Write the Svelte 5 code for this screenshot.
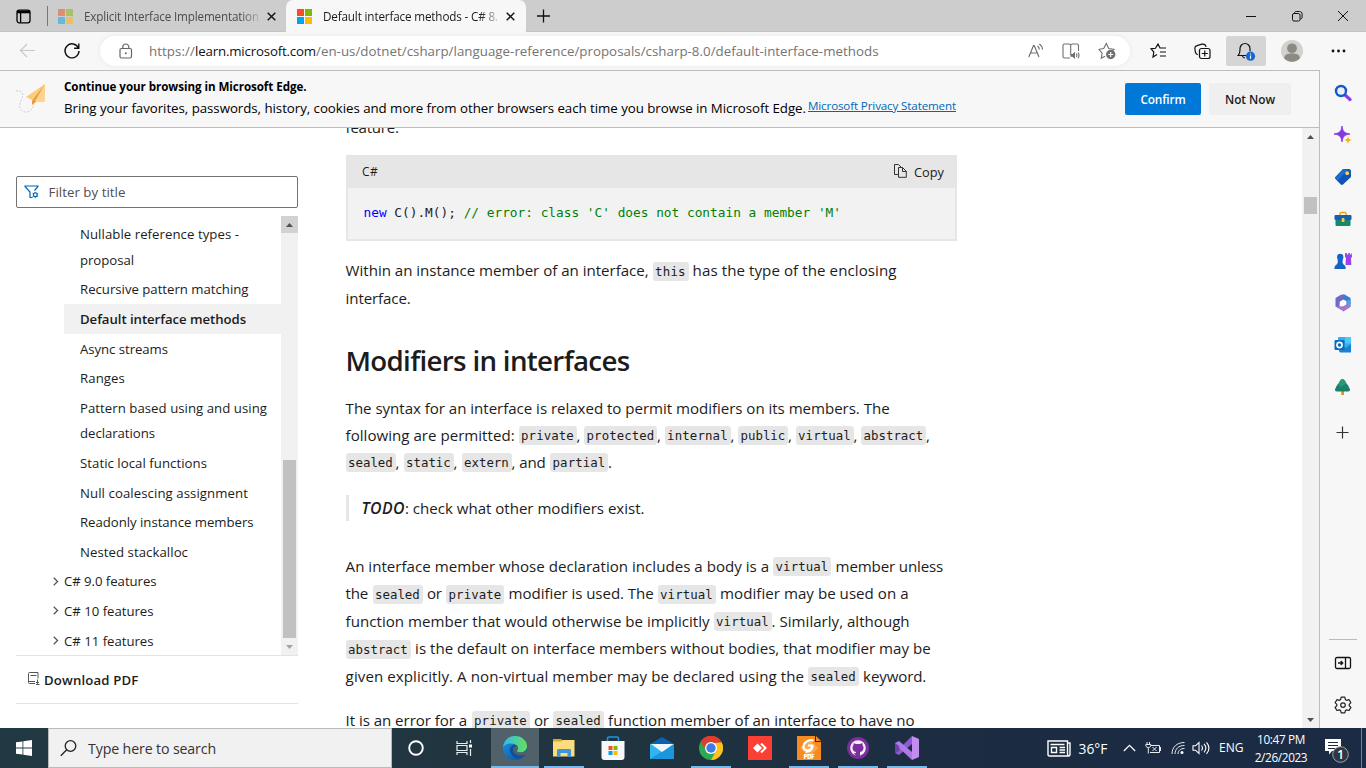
<script>
  // Spreads letters so a run of text fills its column width.
  function fit(node, width) {
    const natural = node.getBoundingClientRect().width;
    const count = [...node.textContent].length;
    if (width && count) node.style.letterSpacing = `${(width - natural) / count}px`;
  }

  const toc = [
    { lines: [['Nullable reference types -', 159], ['proposal', 54]] },
    { lines: [['Recursive pattern matching', 168.5]] },
    { lines: [['Default interface methods', 166]], current: true },
    { lines: [['Async streams', 88]] },
    { lines: [['Ranges', 45]] },
    { lines: [['Pattern based using and using', 187], ['declarations', 75]] },
    { lines: [['Static local functions', 127]] },
    { lines: [['Null coalescing assignment', 168]] },
    { lines: [['Readonly instance members', 173.5]] },
    { lines: [['Nested stackalloc', 108]] },
    { lines: [['C# 9.0 features', 92.5]], parent: true },
    { lines: [['C# 10 features', 89.5]], parent: true },
    { lines: [['C# 11 features', 89.5]], parent: true }
  ];

  // Each run: text, gap before it, width, and whether it is inline code.
  const p1 = [
    [['Within an instance member of an interface,', 0, 303], ['this', 4, 36, 1], ['has the type of the enclosing', 4, 204]],
    [['interface.', 0, 65]]
  ];
  const p2 = [
    [['The syntax for an interface is relaxed to permit modifiers on its members. The', 0, 544]],
    [['following are permitted:', 0, 169], ['private', 4, 58, 1], [',', 0, 4], ['protected', 3.5, 73, 1], [',', 0, 4], ['internal', 3.5, 66, 1], [',', 0, 4], ['public', 3.5, 50, 1], [',', 0, 4], ['virtual', 3.5, 58, 1], [',', 0, 4], ['abstract', 3.5, 65, 1], [',', 0, 4]],
    [['sealed', 0, 50, 1], [',', 0, 4], ['static', 4, 50, 1], [',', 0, 4], ['extern', 4, 50, 1], [', and', 0, 34], ['partial', 4.5, 58, 1], ['.', 0, 4]]
  ];
  const p3 = [
    [['An interface member whose declaration includes a body is a', 0, 423.5], ['virtual', 4, 58, 1], ['member unless', 4.5, 107.5]],
    [['the', 0, 22.5], ['sealed', 4.5, 50, 1], ['or', 4.5, 14.5], ['private', 4.5, 58, 1], ['modifier is used. The', 4.5, 145], ['virtual', 4, 58, 1], ['modifier may be used on a', 4.5, 188.5]],
    [['function member that would otherwise be implicitly', 0, 364], ['virtual', 4, 58, 1], ['. Similarly, although', 0, 138]],
    [['abstract', 0, 65, 1], ['is the default on interface members without bodies, that modifier may be', 4.5, 515.5]],
    [['given explicitly. A non-virtual member may be declared using the', 0, 458.5], ['sealed', 4, 50.5, 1], ['keyword.', 4.5, 63]]
  ];
  const p4 = [
    [['It is an error for a', 0, 121.5], ['private', 4.5, 58, 1], ['or', 4.5, 14.5], ['sealed', 4.5, 50.5, 1], ['function member of an interface to have no', 4.5, 306.5]]
  ];
</script>

{#snippet para(lines, cls)}
  <div class="para {cls}">
    {#each lines as line}
      <div class="line">
        {#each line as [text, gap, width, code]}
          <span class="run" class:code style="margin-left:{gap}px;width:{width}px"><span class="t" use:fit={code ? width - 5.4 : width}>{text}</span></span>
        {/each}
      </div>
    {/each}
  </div>
{/snippet}

{#snippet mslogo(o)}
  <svg width="15" height="15" viewBox="0 0 15 15" opacity={o}><path fill="#f25022" d="M0 0h7v7H0z" /><path fill="#7fba00" d="M8 0h7v7H8z" /><path fill="#00a4ef" d="M0 8h7v7H0z" /><path fill="#ffb900" d="M8 8h7v7H8z" /></svg>
{/snippet}

{#snippet cross()}
  <svg width="9" height="9" viewBox="0 0 9 9" stroke="#111" stroke-width="1.4"><path d="M.7.7l7.6 7.6M8.3.7L.7 8.3" /></svg>
{/snippet}

<div class="screen">
  <header class="tabs">
    <svg class="ws" width="15" height="15" viewBox="0 0 15 15" fill="none" stroke="#000" stroke-width="1.3"><rect x="1" y="1.2" width="13" height="12.6" rx="2.2" /><path d="M1 3h13" stroke-width="2.6" /><path d="M4.6 4v9.5" /></svg>
    <i class="sep"></i>
    <div class="tab idle">{@render mslogo(0.5)}<span class="ttl"><span class="t" use:fit={175}>Explicit Interface Implementation</span></span>{@render cross()}</div>
    <div class="tab active">{@render mslogo(1)}<span class="ttl"><span class="t" use:fit={175}>Default interface methods - C# 8.</span></span>{@render cross()}</div>
    <svg class="plus" width="14" height="14" viewBox="0 0 14 14" stroke="#111" stroke-width="1.3"><path d="M6.500 .5v13M0 7h13" /></svg>
    <div class="win">
      <svg width="12" height="12" viewBox="0 0 12 12" stroke="#111"><path d="M1 6.5h10" /></svg>
      <svg width="12" height="12" viewBox="0 0 12 12" fill="none" stroke="#111"><rect x="1.5" y="3.5" width="7.5" height="7.5" rx="1.5" /><path d="M3.5 3.2c0-1.2.8-1.7 1.7-1.7h3.3c1.7 0 2.6.9 2.6 2.6v3.2c0 1-.6 1.7-1.8 1.7" /></svg>
      <svg width="12" height="12" viewBox="0 0 12 12" stroke="#111"><path d="M1 1l10 10M11 1L1 11" /></svg>
    </div>
  </header>

  <div class="toolbar">
    <svg width="16" height="16" viewBox="0 0 16 16" fill="none" stroke="#c8c8c8" stroke-width="1.2"><path d="M16 7.500H1.500M8 1L1.500 7.500 8 14" /></svg>
    <svg width="18" height="18" viewBox="0 0 18 18" fill="none" stroke="#111" stroke-width="1.4"><path d="M15.400 6A7 7 0 1 0 16 9M15.800 1.500v4.700h-4.700" /></svg>
    <div class="address">
      <svg class="lock" width="14" height="17" viewBox="0 0 14 17" fill="none" stroke="#666" stroke-width="1.2"><rect x="1" y="5.500" width="11.500" height="9.500" rx="1.500" /><path d="M3.800 5.500V4a3 3 0 0 1 6 0v1.500" /><circle cx="6.800" cy="10.200" r="1" fill="#666" stroke="none" /></svg>
      <span class="url"><span class="t" use:fit={46}>https://</span><b class="t" use:fit={121}>learn.microsoft.com</b><span class="t" use:fit={562.5}>/en-us/dotnet/csharp/language-reference/proposals/csharp-8.0/default-interface-methods</span></span>
      <svg class="ra" width="17" height="16" viewBox="0 0 17 16" fill="none" stroke="#707070" stroke-width="1.2"><path d="M.8 14L5.500 2.500h.700L11 14M2.500 10h6.700M9.500 3c1.200.900 1.800 2 1.800 3.500M11.300 1c2 1.300 3.200 3.200 3.200 5.500" /></svg>
      <svg class="rd" width="18" height="17" viewBox="0 0 18 17" fill="none" stroke="#707070" stroke-width="1.100"><path d="M8 15H2.500C1.500 15 1 14.500 1 13.500v-11C1 1.500 1.500 1 2.500 1H7c1 0 1.700.6 1.700 1.500v9.500M8.700 2.500C8.700 1.600 9.300 1 10.300 1H15c1 0 1.500.5 1.500 1.500V8" /><path d="M8.500 11h2l2.500-2.300v7.300L10.500 13.700h-2z" fill="#707070" stroke="none" /><path d="M14.300 10.700c.8 1 .8 2.300 0 3.300M16 9.500c1.400 2 1.400 3.800 0 5.800" /></svg>
      <svg class="sa" width="19" height="18" viewBox="0 0 19 18" fill="none" stroke="#707070" stroke-width="1.100"><path d="M7 14.300L3.300 16.200l.8-5L1 7.300l4.700-.8L8.300 1.500l2.500 5 5.200.8-1.700 1.700" /><circle cx="12.700" cy="12.500" r="4.700" fill="#707070" stroke="none" /><path d="M12.700 10v5M10.200 12.500h5" stroke="#fff" /></svg>
    </div>
    <div class="tools">
      <svg width="17" height="16" viewBox="0 0 17 16" fill="none" stroke="#111" stroke-width="1.200"><path d="M7 11.500L3 14l.8-5L1 5.800l4.500-.5L8 1l2 4h6M10 9h6M10 13h6" /></svg>
      <svg width="17" height="17" viewBox="0 0 17 17" fill="none" stroke="#111" stroke-width="1.200"><path d="M3.800 11.800C2.500 11.300 1.800 10.500 1.500 9.500L.9 6C.6 4 1.300 3 3 2.600L8 1.200c2-.5 3.200.1 3.800 1.800l.2.900" /><rect x="5.500" y="5.500" width="10.500" height="10" rx="2" /><path d="M10.750 7.500v6M7.750 10.500h6" /></svg>
      <div class="bell"><svg width="19" height="19" viewBox="0 0 19 19" fill="none" stroke="#111" stroke-width="1.200"><path d="M9 13.500H1.200C2.500 12 3 10.500 3 8V6.500a5 5 0 0 1 10 0V9M5.500 14c.3 1.500 1.200 2 2.500 2" /><circle cx="13.500" cy="14.200" r="4.600" fill="#1467d2" stroke="none" /><path d="M13.500 13.500v3.200M13.500 11.400v1.200" stroke="#fff" /></svg></div>
      <svg width="22" height="22" viewBox="0 0 22 22"><circle cx="11" cy="11" r="11" fill="#d3d1ce" /><circle cx="11" cy="8.300" r="4.900" fill="#8d8985" /><path d="M3 18c1-4 4-4.500 8-4.500s7 .5 8 4.500c-4 5-12 5-16 0z" fill="#8d8985" /></svg>
      <svg width="15" height="4" viewBox="0 0 15 4" fill="#111"><circle cx="2" cy="2" r="1.400" /><circle cx="7.500" cy="2" r="1.400" /><circle cx="13" cy="2" r="1.400" /></svg>
    </div>
  </div>

  <div class="middle">
    <div class="content">
      <div class="infobar">
        <svg class="plane" width="32" height="34" viewBox="0 0 32 34"><path d="M0 9c5-1 8 2 6.500 6-1 3.500-4 7-2.500 11 2 6 12 6 14-4" fill="none" stroke="#ccc" stroke-dasharray="2 1.500" /><path d="M29 2L10 15l7 3.500-.5 4 4-2.800L28.500 20z" fill="#ffca7a" /><path d="M29 2L16 19v4l3.500-3z" fill="#e69a3c" /><path d="M29 2L19 19l9.500 1z" fill="#ffd48c" /></svg>
        <div class="msg">
          <div class="m1"><b class="t" use:fit={242.500}>Continue your browsing in Microsoft Edge.</b></div>
          <div class="m2"><span class="t" use:fit={742}>Bring your favorites, passwords, history, cookies and more from other browsers each time you browse in Microsoft Edge.</span><span class="priv"><span class="t" use:fit={148}>Microsoft Privacy Statement</span></span></div>
        </div>
        <button class="primary"><span class="t" use:fit={45}>Confirm</span></button>
        <button><span class="t" use:fit={50}>Not Now</span></button>
      </div>

      <div class="page">
        <nav class="side">
          <div class="filter">
            <svg width="16" height="14" viewBox="0 0 16 14" fill="none" stroke="#0067b8" stroke-width="1.200"><path d="M8.500 12.500H6V7L1 1.500V1h13v.5L10.500 5.500" /><circle cx="11.300" cy="9.800" r="1.900" /><path d="M11.300 6.800v1M11.300 12v1.300M8.500 8.300l1 .6M13.200 11l1 .6M8.500 11.500l1-.6M13.200 8.800l1-.6" stroke-width=".8" /></svg>
            <span class="t" use:fit={77}>Filter by title</span>
          </div>
          <div class="scroll">
            <div class="toc">
              {#each toc as item}
                <div class="item" class:current={item.current} class:parent={item.parent}>
                  {#if item.parent}<svg width="7" height="9" viewBox="0 0 7 9" fill="none" stroke="#505050" stroke-width="1.200"><path d="M1.500.8l3.800 3.700-3.800 3.700" /></svg>{/if}
                  <div>{#each item.lines as [text, w]}<div class="tl"><span class="t" use:fit={w}>{text}</span></div>{/each}</div>
                </div>
              {/each}
            </div>
            <div class="bar">
              <div class="btn up"><svg width="7" height="4" viewBox="0 0 7 4"><path d="M0 4L3.500 0 7 4z" fill="#505050" /></svg></div>
              <i class="thumb"></i>
              <div class="btn"><svg width="7" height="4" viewBox="0 0 7 4"><path d="M0 0h7L3.500 4z" fill="#a3a3a3" /></svg></div>
            </div>
          </div>
          <div class="pdf">
            <svg width="13" height="13" viewBox="0 0 13 13" fill="none" stroke="#555"><path d="M7 11.500H1.500a1 1 0 0 1-1-1V1.500a1 1 0 0 1 1-1h8.500v6M.5 9.500H7M2.500 3.500h6M9.500 7.500v4M8 10l1.500 1.500L11 10M8 12.500h3.500" /></svg>
            <b class="t" use:fit={94.500}>Download PDF</b>
          </div>
        </nav>

        <main>
          {@render para([[['feature.', 0, 53]]], 'first')}
          <div class="block">
            <div class="bh"><span class="t lang" use:fit={16}>C#</span>
              <span class="copy"><svg width="13" height="14" viewBox="0 0 13 14" fill="none" stroke="#333"><path d="M4 10.500H.5V.5h4l2.500 2.500M4.500 3.500h4l3.800 3.800v6H4.500zM8.500 3.500v4h3.800" /></svg><span class="t" use:fit={30}>Copy</span></span>
            </div>
            <pre><span class="t" use:fit={477.500}><i class="kw">new</i> C().M(); <i class="cm">// error: class 'C' does not contain a member 'M'</i></span></pre>
          </div>
          {@render para(p1, 'a')}
          <h2><span class="t" use:fit={284}>Modifiers in interfaces</span></h2>
          {@render para(p2, 'b')}
          <blockquote><b class="t" use:fit={43.500}>TODO</b><span class="t" use:fit={239.500}>: check what other modifiers exist.</span></blockquote>
          {@render para(p3, 'c')}
          {@render para(p4, 'd')}
        </main>

        <div class="bar vbar">
          <div class="btn"><svg width="7" height="4" viewBox="0 0 7 4"><path d="M0 4L3.500 0 7 4z" fill="#505050" /></svg></div>
          <i class="thumb"></i>
          <div class="btn"><svg width="7" height="4" viewBox="0 0 7 4"><path d="M0 0h7L3.500 4z" fill="#505050" /></svg></div>
        </div>
      </div>
    </div>

    <aside>
      <svg viewBox="0 0 18 18"><path d="M10.500 10.500l5.500 5" stroke="#8a3ee8" stroke-width="3.200" stroke-linecap="round" /><circle cx="7" cy="7" r="5" fill="#e8f2fd" stroke="#1558c8" stroke-width="2.400" /></svg>
      <svg viewBox="0 0 18 18"><path d="M8 0c.6 3 1 4.800 2.200 5.800C11.300 7 13 7.400 16 8c-3 .6-4.700 1-5.800 2.200C9 11.300 8.600 13 8 16c-.6-3-1-4.700-2.200-5.800C4.700 9 3 8.600 0 8c3-.6 4.700-1 5.800-2.200C7 4.800 7.400 3 8 0z" fill="#8438df" stroke="#8438df" stroke-width=".8" /><path d="M14 10c.4 2.500 1.200 3.300 4 4-2.800.7-3.600 1.500-4 4-.4-2.500-1.200-3.300-4-4 2.800-.7 3.600-1.500 4-4z" fill="#f5b31a" /></svg>
      <svg viewBox="0 0 18 18"><path d="M9 1h6.500L17 2.500V9l-8 7.500c-.8.600-1.500.6-2.200 0L1.500 11c-.7-.8-.7-1.500 0-2.200z" fill="#0f55b8" /><path d="M1.500 9.500L9.500 1.500H14L3.500 12.800z" fill="#2585e8" opacity=".55" /><circle cx="13.200" cy="5.200" r="1.900" fill="#ffd25a" /></svg>
      <svg viewBox="0 0 18 18"><path d="M6 5V3.500C6 2.700 6.500 2.500 7 2.500h4c.7 0 1 .3 1 1V5" fill="none" stroke="#eaa51f" stroke-width="1.500" /><rect x="1.500" y="8" width="15" height="8" rx="1" fill="#138a70" /><rect x=".5" y="5" width="17" height="5" rx="1" fill="#175fb5" /><rect x="7.700" y="8" width="2.800" height="4" rx=".8" fill="#ffc83d" /></svg>
      <svg viewBox="0 0 18 18"><path d="M11 1h1.800v1.500h1.500V1H16v1.500h1.500V1H18v4l-1 1 .3 7H11.500l.5-7-1-1z" fill="#9a43e6" /><circle cx="6.200" cy="5" r="3.200" fill="#1463c7" /><path d="M3.500 7.500h5.500v1.300H8.300c.2 2.500 1 3.700 2.500 4.700.8.700 1 2 .8 3.500H.6c-.2-1.500 0-2.800.8-3.500 1.500-1 2.500-2.200 2.600-4.700H3.500z" fill="#1463c7" /></svg>
      <svg viewBox="0 0 18 18"><path d="M6.500 1L10.500.5 16.500 4v6l-4 1.500V7L9 5.500 5 8z" fill="#3f78d2" /><path d="M6.500 1L1.500 4v8.500l4.100 2.300V8.300L9 5.500 10.500.5z" fill="#6d6bc4" /><path d="M1.800 12.500l7.200-.2 3.500-2.500L16.500 8v5L9.500 17.500z" fill="#a875cf" /><path d="M16.500 5v7.500l-4-2V7z" fill="#4aa3dd" /><path d="M9 6l3.200 1.600v3L9 12.300 6 10.600v-3z" fill="#fff" /></svg>
      <svg viewBox="0 0 18 18"><rect x="4" y="1" width="13" height="13" rx="1" fill="#35aeea" /><path d="M11 1h6v6.500h-6z" fill="#50c8f4" /><path d="M5 8l6.500 4 5.500-4v8.500H6L5 15z" fill="#1684cf" /><rect x=".5" y="4" width="10" height="10" rx="1" fill="#0b6bbd" /><circle cx="5.500" cy="9" r="2.600" fill="none" stroke="#fff" stroke-width="1.600" /></svg>
      <svg viewBox="0 0 18 18"><path d="M7.200 12H10v5H7.200z" fill="#dc981e" /><path d="M8.500 1c1.200 0 3 2 4 4.500 1.500 1.500 2.800 4 3.500 6 .2 1.200-.6 2-1.800 2H2.800c-1.200 0-2-.8-1.800-2 .7-2 2-4.500 3.500-6C5.500 3 7.300 1 8.500 1z" fill="#198269" /><path d="M8.500 1c1.200 0 3 2 4 4.500L6.500 9l-2-3.500C5.500 3 7.300 1 8.500 1z" fill="#36a58b" opacity=".6" /></svg>
      <svg class="add" viewBox="0 0 18 18" stroke="#333" stroke-width="1.200"><path d="M8.500 2.500v12M2.500 8.500h12" /></svg>
      <i class="rule"></i>
      <svg viewBox="0 0 18 18" fill="none" stroke="#111" stroke-width="1.300"><rect x="1.500" y="3.500" width="15" height="11" rx="1.500" /><path d="M11.500 3.500v11M4 9h4.500M6.700 7l2 2-2 2" /></svg>
      <svg viewBox="0 0 18 18" fill="none" stroke="#222" stroke-width="1.200"><path d="M7.200 1.200h3.600l.6 2.400 1.300.7 2.400-.6 1.800 3-1.700 1.700v1.400l1.700 1.600-1.800 3.100-2.400-.7-1.300.8-.6 2.300H7.200l-.6-2.300-1.300-.8-2.400.7-1.800-3.100 1.700-1.600V8.400L1.100 6.700l1.800-3 2.400.6 1.300-.7z" stroke-linejoin="round" /><circle cx="9" cy="9.100" r="2.300" /></svg>
    </aside>
  </div>

  <footer>
    <div class="start"><svg width="16" height="16" viewBox="0 0 16 16" fill="#fff"><path d="M0 2.300L6.500 1.400v6.200H0zM7.300 1.300L16 0v7.600H7.300zM0 8.400h6.500v6.200L0 13.700zM7.300 8.400H16V16l-8.700-1.300z" /></svg></div>
    <div class="search"><svg width="17" height="17" viewBox="0 0 17 17" fill="none" stroke="#222" stroke-width="1.300"><circle cx="10.500" cy="6" r="5.300" /><path d="M6.700 9.800L.8 15.800" /></svg><span class="t" use:fit={128}>Type here to search</span></div>
    <div class="sys"><svg width="16" height="16" viewBox="0 0 16 16"><circle cx="8" cy="8" r="6.800" fill="none" stroke="#fff" stroke-width="1.900" /></svg></div>
    <div class="sys"><svg width="17" height="16" viewBox="0 0 17 16" fill="none" stroke="#e8edf0" stroke-width="1.200"><path d="M1 1v2.500h10V1M1 15v-2.500h10V15M1 5.500h10v5H1zM14.500 0v3M14.500 9v7" /><path d="M13 4.500h3v3h-3z" fill="#fff" stroke="none" /></svg></div>
    <div class="app on">
      <svg viewBox="0 0 24 24"><defs><linearGradient id="eg" x1="0" x2="1"><stop offset="0" stop-color="#32b8ee" /><stop offset="1" stop-color="#66e05a" /></linearGradient><linearGradient id="eb" x1="0" y1="0" x2="1" y2="1"><stop offset="0" stop-color="#1a9ae4" /><stop offset="1" stop-color="#0c4a9e" /></linearGradient></defs><circle cx="12" cy="12" r="12" fill="url(#eb)" /><path d="M0 11C1 4 6 0 12 0c7 0 12 5 12 10 0 4-3 6.500-6.500 6.500-3 0-4-1-3.500-2 1-1 1.300-2 .8-3.500C13.500 7.500 5 5.500 0 11z" fill="url(#eg)" /><path d="M14 14.500C12.500 13 13 10.500 14 9.500c-4-2-7.500 1-7 5.500.6 4 5 7.500 9.500 7.500 2.500-.5 4.500-2 6-4-3 1.500-7 1-8.500-2z" fill="#0e4f9f" /><path d="M10 14c0-3 1.800-4.500 4-4 1.500 1 1 3 0 4.500-.5 1.200.7 2 3.500 2 2 0 3.500-.7 4.500-1.500h2l-1 3.500c-5 2.500-13 .5-13-4.500z" fill="#50616a" /></svg>
    </div>
    <div class="app run2"><svg viewBox="0 0 24 24"><path d="M1 3h8l2 2h11v3H1z" fill="#e0a526" /><path d="M1 5.500h8L10.500 4H22.500v16.500H1z" fill="#fddc7c" /><path d="M5 21v-6.500C5 13.500 5.500 13 6.500 13h11c1 0 1.500.5 1.500 1.500V21h-3.500v-4h-7v4z" fill="#3f95d8" /></svg></div>
    <div class="app"><svg viewBox="0 0 24 24"><path d="M6.500 5V2.500C6.500 1.500 7 1 8 1h8c1 0 1.500.5 1.500 1.500V5" fill="none" stroke="#1898df" stroke-width="1.600" /><path d="M.5 5h23v16c0 2-1 3-3 3h-17c-2 0-3-1-3-3z" fill="#f8f8f8" /><path fill="#f25022" d="M7.500 10h4v4h-4z" /><path fill="#7fba00" d="M12.500 10h4v4h-4z" /><path fill="#00a4ef" d="M7.500 15h4v4h-4z" /><path fill="#ffb900" d="M12.500 15h4v4h-4z" /></svg></div>
    <div class="app"><svg viewBox="0 0 24 24"><path d="M0 8L12 1l12 7v4H0z" fill="#0b62b5" /><path d="M0 8h24v15H0z" fill="#2fb5ef" /><path d="M0 23L24 8v15z" fill="#1a96dd" /><path d="M1 8h22.500L12 16z" fill="#f3f6f8" /></svg></div>
    <div class="app run2"><svg viewBox="0 0 24 24"><circle cx="12" cy="12" r="12" fill="#2da94f" /><path d="M1.600 6A12 12 0 0 1 22.400 6L12 7z" fill="#e33b2e" /><path d="M1.600 6l6 9 4.400-8z" fill="#e33b2e" /><path d="M22.400 6A12 12 0 0 1 12 24l5-9-3-8z" fill="#fcc31e" /><path d="M22.700 6.500H12L1.600 6A12 12 0 0 1 22.700 6.500z" fill="#e33b2e" /><circle cx="12" cy="12" r="6" fill="#fff" /><circle cx="12" cy="12" r="4.700" fill="#3e7de8" /></svg></div>
    <div class="app"><svg viewBox="0 0 24 24"><path d="M0 0h24v24H0z" fill="#fb3f35" /><path d="M9.500 7.500L14 12l-4.500 4.500L5 12z" fill="#fff" /><path d="M13 7.500l4.500 4.500-4.500 4.500" fill="none" stroke="#fff" stroke-width="2" /></svg></div>
    <div class="app run2"><svg viewBox="0 0 24 24"><path d="M0 0h18v6h6v18H0z" fill="#f78b1f" /><path d="M19 0l5 5h-5z" fill="#f78b1f" /><path d="M12 3l9 9-9 9-9-9z" fill="#f9a957" /><path d="M16.500 4.500C11 3 6.500 7 6.500 11c0 3.500 5.500 4.500 8 1.500l.8-3H11M15.500 10c0 4-3 6-7 5.500" fill="none" stroke="#fff" stroke-width="2.200" /><text x="12" y="22.800" text-anchor="middle" font-size="6.300" font-weight="800" fill="#fff" textLength="11">PDF</text></svg></div>
    <div class="app run2"><svg viewBox="0 0 24 24"><circle cx="12" cy="12" r="11" fill="#7b2f9d" /><circle cx="12" cy="12" r="7.800" fill="#f5edf8" /><path d="M10 20v-3c-2 .5-3-.5-3.500-1.700M14 20v-4c2.500-.5 3.500-2 3.500-4.200 0-1-.4-1.900-1-2.500.2-.7.100-1.500-.2-2.100-.9 0-1.600.4-2.300.9-1.300-.3-2.700-.3-4 0-.7-.5-1.400-.9-2.300-.9-.3.600-.4 1.400-.2 2.100-.6.600-1 1.500-1 2.500 0 2.200 1 3.700 3.500 4.200V20z" fill="#7b2f9d" /></svg></div>
    <div class="app run2"><svg viewBox="0 0 24 24"><path d="M17 0l7 3v18l-7 3z" fill="#c38df0" /><path d="M17 0v8L4 19l-4-2z" fill="#8c5bd0" /><path d="M0 7l4-2 13 11v8L0 8z" fill="#ad7ae6" /><path d="M0 7l4 3v5l-4 2z" fill="#6c42a9" /></svg></div>
    <div class="tray">
      <svg width="24" height="17" viewBox="0 0 24 17" fill="none" stroke="#fff" stroke-width="1.400"><path d="M20.500 3h2.500v11c0 1-.5 2-1.500 2H2.500C1.500 16 1 15.500 1 14.500V1h19.500v13c0 1 .5 2 1.300 2M3.500 4.500h14M12.500 7.500h5.500M12.500 10h5.500M12.500 12.500h5.500M4.500 7.500h5v5h-5z" /></svg>
      <span class="t temp" use:fit={27}>36°F</span>
      <svg class="chev" width="13" height="8" viewBox="0 0 13 8" fill="none" stroke="#fff" stroke-width="1.200"><path d="M.8 7l5.700-5.700L12.200 7" /></svg>
      <svg class="bat" width="17" height="14" viewBox="0 0 17 14" fill="none" stroke="#e9edf2"><path d="M5 11.500h9.500v-7H6M15.500 6v4M2 1v2M4.500 1v2M.8 3.500h5c0 2-.5 3-2.500 3s-2.500-1-2.500-3zM3.300 6.500v6M7.500 6l4 4M11.500 6l-4 4" /></svg>
      <svg class="wifi" width="15" height="14" viewBox="0 0 15 14" fill="none" stroke="#e9edf2"><path d="M1 13C1 6 6 1.500 13.500 1.500M4 13c0-5 3.500-8.500 9.500-8.500M7 13c0-3.500 2.500-5.500 6.500-5.500" /><circle cx="11" cy="11.500" r="1.500" fill="#fff" stroke="none" /></svg>
      <svg class="spk" width="18" height="14" viewBox="0 0 18 14" fill="none" stroke="#fff" stroke-width="1.100"><path d="M1 4.800h2.500L7 1.500v11L3.500 9.200H1zM9.500 4.500c1.200 1.500 1.200 3.500 0 5M12 2.800c2.200 2.500 2.200 6 0 8.500M14.500 1.300c3 3.500 3 8 0 11.500" /></svg>
      <span class="t eng" use:fit={23.500}>ENG</span>
      <div class="clock"><div><span class="t" use:fit={48}>10:47 PM</span></div><div><span class="t" use:fit={52.500}>2/26/2023</span></div></div>
      <svg class="note" width="24" height="24" viewBox="0 0 24 24"><path d="M0 0h16v12H7l-3 3.500V12H0z" fill="#fff" /><path d="M3 3.500h10M3 6.500h10M3 9.500h7" stroke="#1c2c44" /><circle cx="15.500" cy="15.500" r="7.800" fill="#303640" stroke="#a0a5ac" /><text x="15.500" y="20" text-anchor="middle" font-size="12.500" font-weight="600" fill="#fff">1</text></svg>
      <i class="peek"></i>
    </div>
  </footer>
</div>

<style>
  :global(body) { margin: 0; overflow: hidden; }
  * { box-sizing: border-box; }
  svg { display: block; flex: none; }
  .screen { width: 1366px; height: 768px; display: flex; flex-direction: column; overflow: hidden; font-family: "Open Sans", "Noto Sans", sans-serif; color: #1c1c1c; background: #fff; }
  .t { display: inline-block; white-space: pre; flex: none; }

  .tabs { height: 32px; flex: none; background: #cdcdcd; display: flex; align-items: center; box-shadow: inset 0 -1px #c3c3c3; }
  .ws { margin-left: 16px; }
  .sep { width: 1px; height: 20px; background: #777; margin-left: 16px; }
  .tab { height: 32px; display: flex; align-items: center; font-size: 11.700px; }
  .ttl { line-height: 18px; padding-bottom: 1px; }
  .idle { width: 238px; padding-left: 10px; color: #4c4c4c; }
  .active { width: 240px; padding-left: 11px; background: #f7f7f7; border-radius: 7px 7px 0 0; color: #1a1a1a; }
  .ttl { width: 174px; margin: 0 9px 0 11px; overflow: hidden; -webkit-mask-image: linear-gradient(90deg, #000 90%, rgba(0, 0, 0, .25)); mask-image: linear-gradient(90deg, #000 90%, rgba(0, 0, 0, .25)); }
  .plus { margin-left: 11px; }
  .win { margin-left: auto; display: flex; gap: 34px; padding-right: 17px; }

  .toolbar { height: 38px; flex: none; background: #f7f7f7; display: flex; align-items: center; padding-left: 19px; }
  .toolbar > svg + svg { margin-left: 28px; }
  .address { height: 30px; width: 1030px; margin-left: 19px; border-radius: 15px; background: #fff; box-shadow: 0 0 4px #e6e6e6; display: flex; align-items: center; padding-left: 19px; flex: none; }
  .url { width: 730px; margin-left: 16px; display: flex; font-size: 13.300px; color: #747474; }
  .url b { font-weight: 400; color: #111; }
  .ra { margin-left: 149px; }
  .rd { margin-left: 17px; }
  .sa { margin-left: 18px; }
  .tools { display: grid; grid-template-columns: 58px 32px 40px 52px 40px; align-items: center; justify-items: center; margin-left: 6px; }
  .tools > svg:first-child { justify-self: start; margin-left: 14px; }
  .tools > svg:nth-child(2) { justify-self: start; }
  .bell { width: 40px; height: 30px; background: #d5d5d5; border-radius: 2px; display: grid; place-items: center; padding-left: 1px; }

  .middle { flex: 1; min-height: 0; display: flex; background: #f7f7f7; }
  .content { width: 1320px; flex: none; border-right: 1px solid #bdbdbd; border-top: 1px solid #bdbdbd; display: flex; flex-direction: column; }
  .infobar { height: 57px; flex: none; display: flex; align-items: center; border-bottom: 1px solid #bdbdbd; }
  .plane { margin-left: 16px; }
  .msg { width: 1061px; padding-left: 16px; color: #000; margin-top: -3px; }
  .m1 { font-size: 11.600px; line-height: 18px; height: 20px; }
  .m2 { font-size: 13.300px; line-height: 20px; height: 20px; display: flex; }
  .priv { color: #0067b8; font-size: 11.600px; margin-left: 2px; line-height: 15px; height: 15px; }
  .priv .t { text-decoration: underline; }
  button { width: 82px; height: 32px; border: 0; border-radius: 2px; background: #efefef; margin: 0; padding: 0 0 1px; font: 600 11.800px "Open Sans", sans-serif; color: #1a1a1a; }
  .primary { width: 76px; margin: 0 8px 0 16px; background: #0078d7; color: #fff; }

  .page { flex: 1; min-height: 0; display: flex; background: #fff; overflow: hidden; }
  .side { width: 282px; margin-left: 16px; padding-top: 48px; flex: none; }
  .filter { height: 32px; border: 1px solid #737373; border-radius: 2px; display: flex; align-items: center; padding-left: 7px; font-size: 13.300px; color: #505050; }
  .filter svg { margin-right: 8.500px; }
  .scroll { margin-top: 8px; height: 440px; display: flex; border-bottom: 1px solid #e3e3e3; }
  .toc { width: 265px; padding-top: 3.200px; font-size: 13.200px; flex: none; overflow: hidden; }
  .item { margin-left: 48px; padding: 2px 0 2px 16px; }
  .item.parent { margin-left: 36px; padding-left: 0; display: flex; align-items: center; }
  .parent svg { margin-right: 5px; margin-left: -.5px; width: 7.500px; }
  .current { background: #f1f1f1; font-weight: 600; }
  .tl { height: 25.600px; line-height: 27px; }
  .bar { width: 17px; flex: none; background: #f1f1f1; display: flex; flex-direction: column; align-items: center; }
  .btn { width: 17px; height: 17px; display: grid; place-items: center; }
  .up { background: #d2d2d2; }
  .scroll .thumb { width: 13px; height: 178px; background: #c1c1c1; margin-top: 227px; }
  .pdf { height: 48px; border-bottom: 1px solid #e3e3e3; display: flex; align-items: center; padding-left: 12px; font-size: 13.200px; gap: 3px; }
  .pdf svg { margin-top: -2px; }
  .pdf b { font-weight: 600; }

  main { width: 956px; margin-left: 48px; flex: none; font-size: 15.100px; }
  .line { display: flex; align-items: center; height: 27.500px; }
  .run { flex: none; white-space: pre; line-height: 27px; }
  .para .line { margin-left: -.4px; }
  .code { background: #e6e6e6; border-radius: 3px; height: 19px; line-height: 19px; padding-left: 2.500px; margin-top: 1px; font-family: "DejaVu Sans Mono", monospace; font-size: 12.400px; }
  .first { margin-top: -14px; }
  .block { width: 611px; height: 86px; margin-top: 13.500px; border: 2px solid #e6e6e6; border-top: 0; background: #f2f2f2; }
  .bh { height: 33px; background: #e6e6e6; display: flex; align-items: center; justify-content: space-between; padding: 0 11px 0 14px; font-size: 12.800px; }
  .lang { font-size: 12px; margin-top: -1px; }
  .copy { display: flex; align-items: center; gap: 7px; padding-top: 1px; }
  .copy svg { margin-top: -2px; }
  pre { margin: 0; padding: 16px 0 0 15.500px; font: 12.790px/18px "DejaVu Sans Mono", monospace; }
  pre i { font-style: normal; }
  .kw { color: #0101fd; }
  .cm { color: #008000; }
  .a { margin-top: 16px; }
  h2 { margin: 29.500px 0 0 -.5px; height: 36px; line-height: 36px; font-size: 27.700px; font-weight: 600; }
  .b { margin-top: 17px; }
  .b .line { height: 27px; }
  blockquote { margin: 19px 0 0; height: 26px; line-height: 26px; border-left: 3px solid #e6e6e6; padding-left: 12.500px; display: flex; }
  blockquote b { font-style: italic; font-weight: 600; font-size: 15.800px; }
  .c { margin-top: 31.800px; }
  .c .line { height: 27.600px; }
  .d { margin-top: 16.200px; }
  .vbar { width: 17px; }
  .vbar .thumb { width: 13px; height: 17px; background: #c1c1c1; margin: 52px 0 auto; }

  aside { width: 46px; display: flex; flex-direction: column; align-items: center; gap: 24px; padding-top: 14px; }
  aside svg { width: 18px; height: 18px; }
  aside .add { margin-top: 4px; }
  .rule { width: 28px; height: 1px; background: #bbb; margin: 173px 0 -10px; flex: none; }

  footer { height: 40px; flex: none; background: linear-gradient(90deg, #213942, #20343f 45%, #1b2b42 75%, #1c2b45); display: flex; align-items: center; color: #fff; }
  .start { width: 48px; display: grid; place-items: center; }
  .search { width: 344px; height: 40px; background: #f1f1f1; border: 1px solid #b9b9b9; display: flex; align-items: center; padding-left: 11px; color: #333; font-size: 14.200px; gap: 11px; }
  .sys { width: 48px; display: grid; place-items: center; }
  .sys + .sys { margin-right: 3px; }
  .app { width: 49px; height: 40px; position: relative; display: grid; place-items: center; flex: none; }
  .app svg { width: 24px; height: 24px; }
  .on { width: 48px; background: #50616a; }
  .on::after, .run2::after { content: ""; position: absolute; bottom: 0; height: 2px; width: 40px; background: #76b9ed; }
  .on::after { width: 48px; }
  .tray { margin-left: auto; display: flex; align-items: center; height: 40px; }
  .temp { margin-left: 8px; width: 27px; font-size: 13.800px; }
  .chev { margin-left: 17.500px; }
  .bat { margin-left: 9px; }
  .wifi { margin-left: 9px; }
  .spk { margin-left: 6px; }
  .eng { margin-left: 9px; width: 23.500px; font-size: 12px; margin-top: -2px; }
  .clock { margin-left: 12px; width: 53px; font-size: 11.800px; line-height: 18px; text-align: center; margin-top: -1px; }
  .note { margin: 6px 12px 0 17px; }
  .peek { width: 1px; height: 40px; background: #77808d; margin-right: 4.500px; }
</style>
